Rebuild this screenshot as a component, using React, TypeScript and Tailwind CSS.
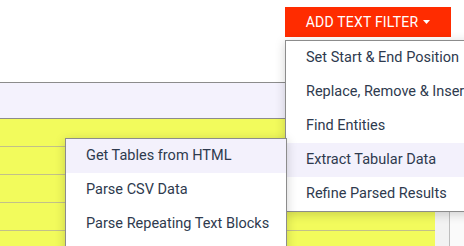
import React from "react";

const mainItems = [
  "Set Start & End Position",
  "Replace, Remove & Insert",
  "Find Entities",
  "Extract Tabular Data",
  "Refine Parsed Results",
];
const subItems = ["Get Tables from HTML", "Parse CSV Data", "Parse Repeating Text Blocks"];

export default function App() {
  return (
    <div
      className="relative w-[464px] h-[246px] overflow-hidden bg-white text-[#2e3a4e]"
      style={{ fontFamily: "Roboto, 'Noto Sans', sans-serif" }}
    >
      <div className="h-[82px] flex justify-end items-start pt-[7px] pr-[13px]">
        <button className="h-[30px] w-[166px] bg-[#ff2c00] text-white text-[14px] flex items-center justify-center gap-[5px] tracking-[0.2px]">
          <span>ADD TEXT FILTER</span>
          <svg width="7" height="4" viewBox="0 0 7 4"><path d="M0 0h7L3.5 4z" fill="white" /></svg>
        </button>
      </div>
      <div className="flex">
        <div className="w-[435px]">
          <div className="h-[37px] border-y border-[#8c8c8c] bg-[#f4f2fd]" />
          <div className="bg-[#f2fb5c]">
            <div className="h-[28px] border-b border-[#c2c08a]" />
            <div className="h-[28px] border-b border-[#c2c08a]" />
            <div className="h-[28px] border-b border-[#c2c08a]" />
            <div className="h-[28px] border-b border-[#c2c08a]" />
            <div className="h-[28px] border-b border-[#c2c08a]" />
          </div>
        </div>
        <div className="w-[15px] bg-[#f2f2f2] border-r border-[#bdbdbd]" />
        <div className="flex-1 bg-[#fafafa]" />
      </div>

      {/* main dropdown */}
      <div className="absolute left-[285px] top-[40px] w-[200px] bg-white border border-[#8c8c8c] shadow-[0_2px_10px_rgba(0,0,0,0.18)] text-[14.5px]">
        {mainItems.map((t, i) => (
          <div
            key={t}
            className={`h-[34px] flex items-center pl-[20px] whitespace-nowrap ${i === 3 ? "bg-[#f3f1fc]" : ""}`}
          >
            {t}
          </div>
        ))}
      </div>

      {/* submenu */}
      <div className="absolute left-[65px] top-[138px] w-[222px] pb-[40px] bg-white border border-[#8c8c8c] shadow-[0_2px_10px_rgba(0,0,0,0.18)] text-[14.5px]">
        {subItems.map((t, i) => (
          <div
            key={t}
            className={`h-[34px] flex items-center pl-[20px] whitespace-nowrap ${i === 0 ? "bg-[#f3f1fc]" : ""}`}
          >
            {t}
          </div>
        ))}
      </div>
    </div>
  );
}
